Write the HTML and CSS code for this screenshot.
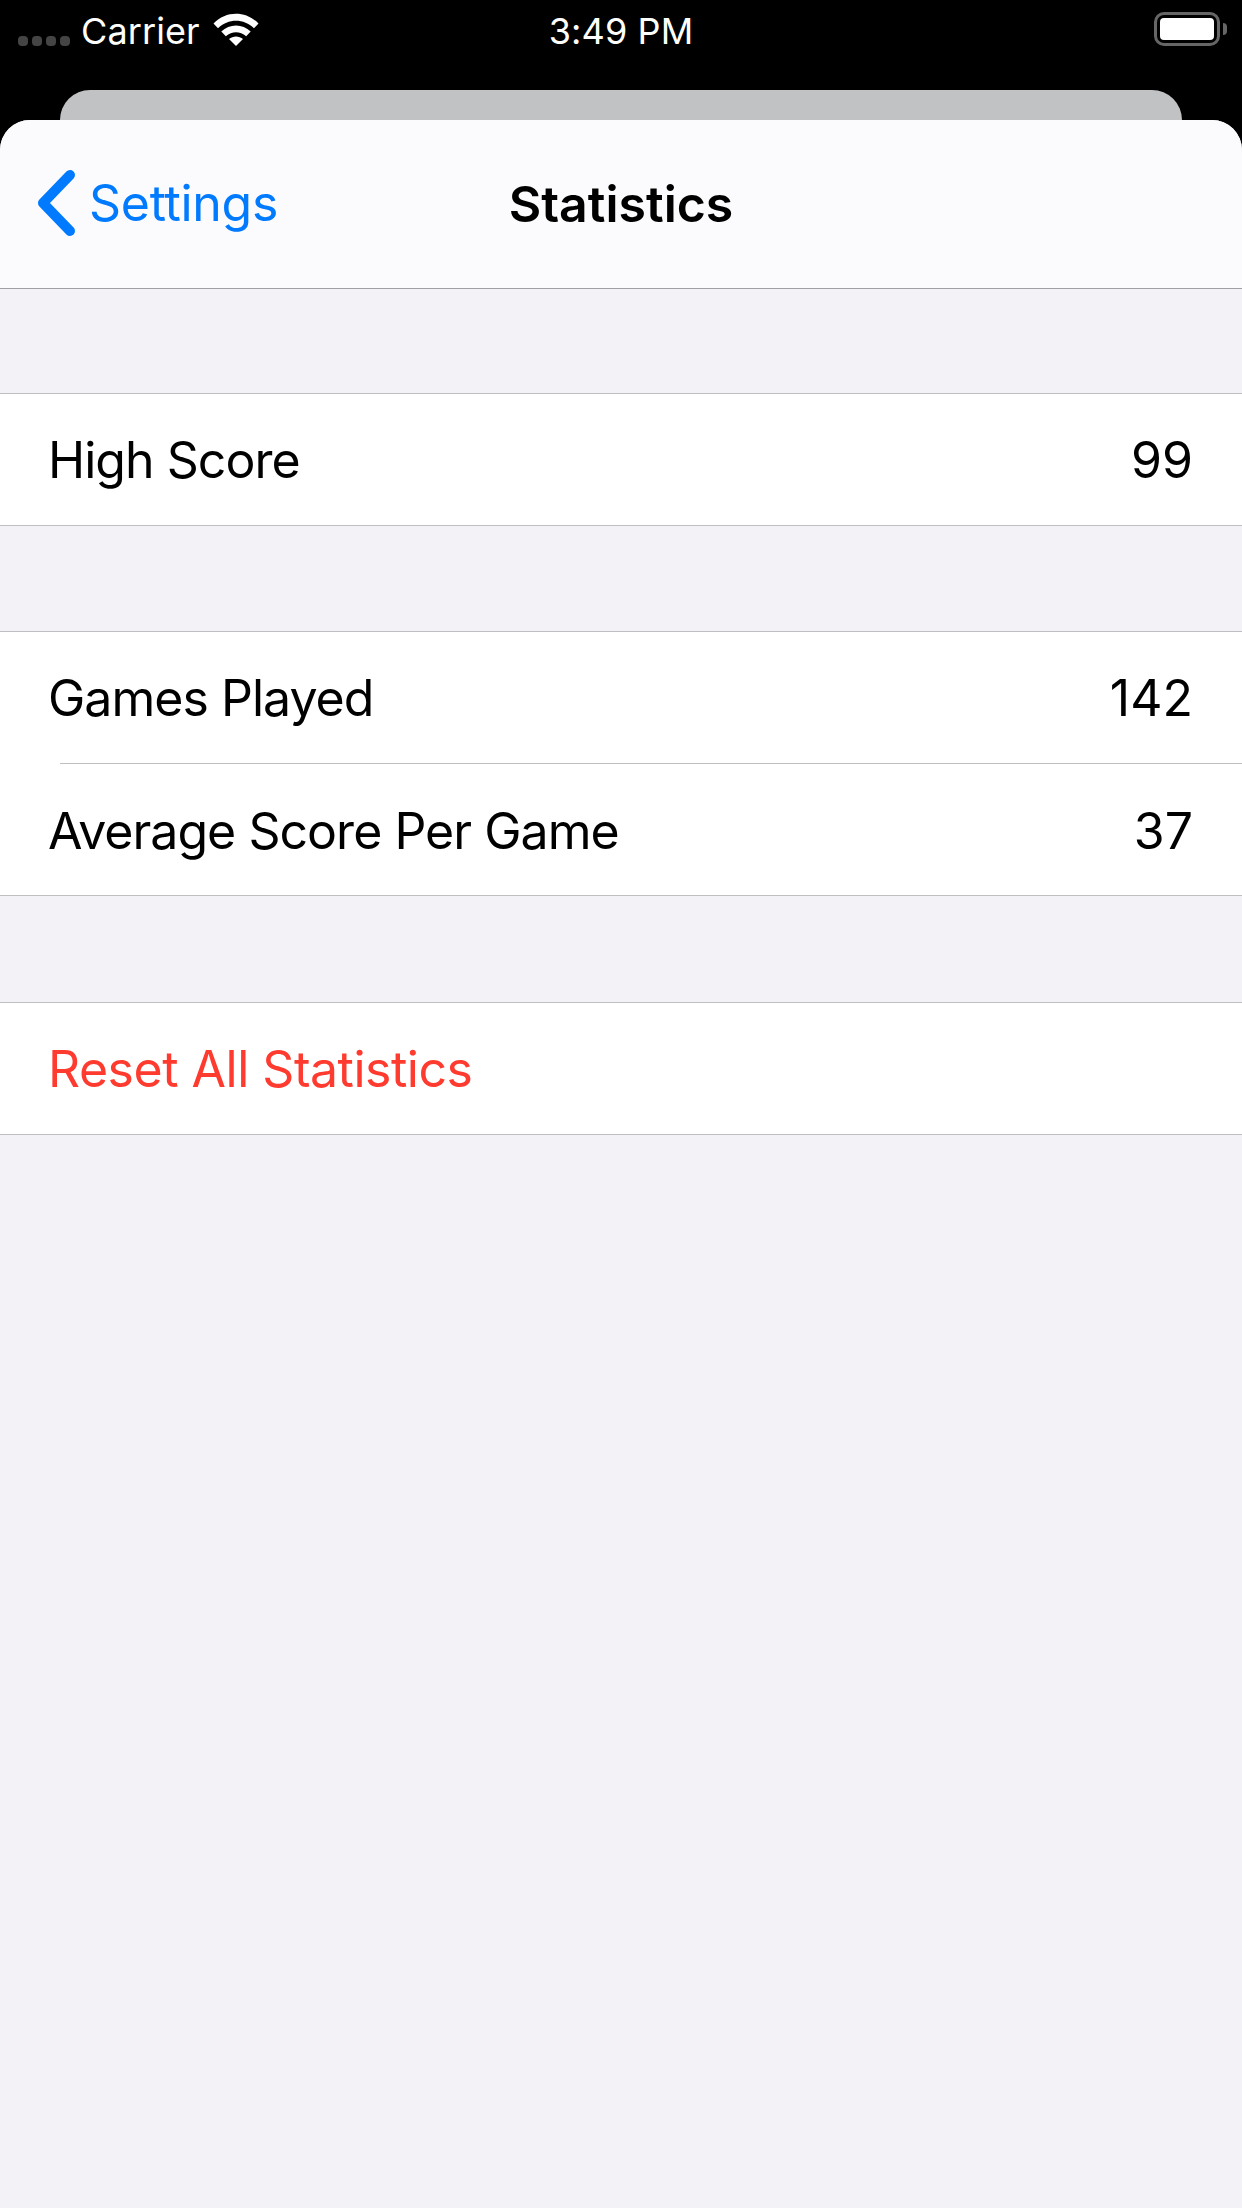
FILE: index.html
```html
<!DOCTYPE html>
<html>
<head>
    <meta charset="utf-8" />
    <title>Statistics</title>
    <link rel="stylesheet" href="styles.css">
</head>
<body>
    <div class="status-bar">
        <div class="status-left">
            <svg class="signal" width="52" height="10" viewBox="0 0 52 10">
                <rect x="0" y="0" width="10" height="10" rx="4" />
                <rect x="14" y="0" width="10" height="10" rx="4" />
                <rect x="28" y="0" width="10" height="10" rx="4" />
                <rect x="42" y="0" width="10" height="10" rx="4" />
            </svg>
            <span class="carrier">Carrier</span>
            <svg class="wifi" width="46" height="33" viewBox="0 0 46 33">
                <path d="M0.5 10.5 C13 -2.5 33 -2.5 45.5 10.5 L41 15.2 C31 5.2 15 5.2 5 15.2 Z" />
                <path d="M8.3 18.5 C16.5 10.5 29.5 10.5 37.7 18.5 L33.2 23.2 C27 17.8 19 17.8 12.8 23.2 Z" />
                <path d="M16 26 C20 22.5 26 22.5 30 26 L23 33 Z" />
            </svg>
        </div>
        <div class="status-time">3:49 PM</div>
        <div class="status-right">
            <div class="battery"><div class="battery-fill"></div></div>
            <div class="battery-nub"></div>
        </div>
    </div>

    <div class="back-card"></div>

    <div class="sheet">
        <div class="nav">
            <a class="nav-back">
                <svg width="38" height="66" viewBox="0 0 38 66">
                    <path d="M33 5 L6 33 L33 61" />
                </svg>
                <span>Settings</span>
            </a>
            <h1 class="nav-title">Statistics</h1>
        </div>

        <div class="group group-first">
            <div class="row"><span>High Score</span><span class="row-value">99</span></div>
        </div>

        <div class="group">
            <div class="row"><span>Games Played</span><span class="row-value">142</span></div>
            <div class="row"><span>Average Score Per Game</span><span class="row-value">37</span></div>
        </div>

        <div class="group group-last">
            <div class="row row-danger"><span>Reset All Statistics</span></div>
        </div>
    </div>
</body>
</html>
```

FILE: styles.css
```css
html, body {
    height: 100%;
}

body {
    margin: 0;
    background-color: #000;
    font-family: Inter, "Liberation Sans", sans-serif;
    color: #000;
    display: flex;
    flex-direction: column;
    overflow: hidden;
}

.status-bar {
    height: 90px;
    flex: none;
    display: grid;
    grid-template-columns: 1fr auto 1fr;
    align-items: start;
    color: #fff;
    font-size: 36px;
    letter-spacing: 0.1px;
}

.status-left {
    display: flex;
    align-items: flex-start;
    padding: 12px 0 0 18px;
}

.signal {
    fill: #444;
    margin-top: 24px;
}

.carrier {
    margin-left: 11px;
    line-height: 36px;
    margin-top: 1px;
}

.wifi {
    fill: #fff;
    margin: 1px 0 0 13px;
}

.status-time {
    line-height: 36px;
    padding-top: 13px;
}

.status-right {
    display: flex;
    justify-content: flex-end;
    align-items: center;
    padding: 12px 15px 0 0;
}

.battery {
    width: 66px;
    height: 34px;
    box-sizing: border-box;
    border: 3px solid #666;
    border-radius: 10px;
    padding: 3px;
}

.battery-fill {
    height: 100%;
    background-color: #fff;
    border-radius: 4px;
}

.battery-nub {
    width: 4px;
    height: 12px;
    margin-left: 3px;
    background-color: #666;
    border-radius: 0 4px 4px 0;
}

.back-card {
    height: 30px;
    flex: none;
    margin: 0 60px;
    background-color: #c1c2c4;
    border-radius: 30px 30px 0 0;
}

.sheet {
    flex: 1;
    background-color: #f2f2f7;
    border-radius: 30px 30px 0 0;
    overflow: hidden;
}

.nav {
    height: 168px;
    display: flex;
    align-items: center;
    justify-content: center;
    position: relative;
    background-color: #fbfbfd;
    border-bottom: 1px solid #a0a0a3;
}

.nav-back {
    position: absolute;
    left: 37px;
    top: 50px;
    display: flex;
    align-items: center;
    color: #007aff;
    font-size: 50px;
    letter-spacing: -0.3px;
}

.nav-back svg {
    fill: none;
    stroke: #007aff;
    stroke-width: 10;
    stroke-linecap: round;
    stroke-linejoin: round;
    margin-right: 14px;
}

.nav-title {
    margin: 0;
    font-size: 50px;
    font-weight: 600;
    letter-spacing: 0;
}

.group {
    margin-top: 105px;
    background-color: #fff;
    border-top: 1px solid #bfbfc2;
    border-bottom: 1px solid #bfbfc2;
}

.group-first {
    margin-top: 104px;
}

.group-last {
    margin-top: 106px;
}

.row {
    height: 131px;
    display: flex;
    align-items: center;
    justify-content: space-between;
    padding: 0 49px 0 48px;
    font-size: 50px;
    letter-spacing: -0.97px;
}

.row + .row {
    height: 128px;
    background-image: linear-gradient(#bfbfc2, #bfbfc2);
    background-size: calc(100% - 60px) 1px;
    background-position: right top;
    background-repeat: no-repeat;
    padding-top: 4px;
}

.row-value {
    letter-spacing: 0;
}

.row-danger {
    color: #ff3b30;
    letter-spacing: -0.5px;
}
```
